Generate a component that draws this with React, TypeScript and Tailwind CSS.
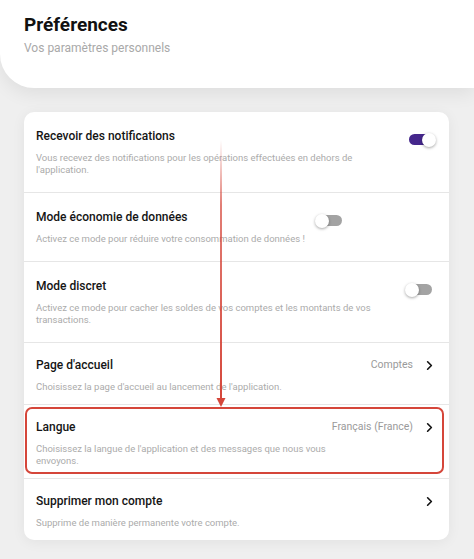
import { ChevronRight } from "lucide-react";

type Row = {
  title: string;
  desc: string;
  kind: "toggle" | "link";
  on?: boolean;
  value?: string;
  toggleRight?: string;
  descWidth?: string;
  highlight?: boolean;
};

const rows: Row[] = [
  {
    title: "Recevoir des notifications",
    desc: "Vous recevez des notifications pour les opérations effectuées en dehors de l'application.",
    kind: "toggle",
    on: true,
    toggleRight: "mr-[1px]",
  },
  {
    title: "Mode économie de données",
    desc: "Activez ce mode pour réduire votre consommation de données !",
    kind: "toggle",
    toggleRight: "mr-[95px]",
  },
  {
    title: "Mode discret",
    desc: "Activez ce mode pour cacher les soldes de vos comptes et les montants de vos transactions.",
    kind: "toggle",
    toggleRight: "mr-[5px]",
  },
  {
    title: "Page d'accueil",
    desc: "Choisissez la page d'accueil au lancement de l'application.",
    kind: "link",
    value: "Comptes",
  },
  {
    title: "Langue",
    desc: "Choisissez la langue de l'application et des messages que nous vous envoyons.",
    kind: "link",
    value: "Français (France)",
    descWidth: "max-w-[300px]",
    highlight: true,
  },
  {
    title: "Supprimer mon compte",
    desc: "Supprime de manière permanente votre compte.",
    kind: "link",
  },
];

function Toggle({ on }: { on?: boolean }) {
  return (
    <div className="relative w-[27px] h-[14px] flex items-center">
      <div
        className={
          on
            ? "w-[22px] h-[11px] rounded-full bg-[#45278c]"
            : "ml-[6px] w-[21px] h-[11px] rounded-full bg-[#a3a3a3]"
        }
      />
      <div
        className={
          "absolute top-0 w-[14px] h-[14px] rounded-full bg-white shadow-[0_1px_3px_rgba(0,0,0,0.35)] " +
          (on ? "right-0" : "left-0")
        }
      />
    </div>
  );
}

export default function App() {
  return (
    <div className="relative w-[474px] h-[559px] overflow-hidden bg-[#efefef] font-['Roboto',sans-serif]">
      {/* En-tête */}
      <div className="relative z-10 h-[88px] bg-white rounded-bl-[34px] px-6 pt-[13px] shadow-[0_6px_18px_rgba(0,0,0,0.07)]">
        <h1 className="text-[19px] leading-[24px] font-bold text-[#111]">Préférences</h1>
        <p className="mt-[3px] text-[12px] leading-[16px] text-[#a9a9a9]">Vos paramètres personnels</p>
      </div>

      {/* Liste des préférences */}
      <div className="px-6 pt-6">
        <div className="w-[425px] bg-white rounded-[10px] shadow-[0_2px_14px_rgba(0,0,0,0.06)]">
          {rows.map((row, i) => (
            <div
              key={row.title}
              className={
                "relative px-3 " +
                (i > 0 ? "border-t border-[#e6e6e6] " : "") +
                (row.kind === "toggle" ? "pt-4 pb-4" : "pt-[14px] pb-[11px]")
              }
            >
              {row.highlight && (
                <div className="absolute top-[2px] bottom-[4px] left-[1px] right-[5px] rounded-[7px] border-2 border-[#d5463a]" />
              )}
              <div className="flex items-center justify-between h-4">
                <span className="text-[12px] leading-4 font-medium text-[#151515]">{row.title}</span>
                {row.kind === "toggle" ? (
                  <div className={"mt-[7px] " + row.toggleRight}>
                    <Toggle on={row.on} />
                  </div>
                ) : (
                  <div className="flex items-center gap-[9px]">
                    {row.value && (
                      <span className="text-[10.5px] text-[#9a9a9a]">{row.value}</span>
                    )}
                    <ChevronRight className="w-[15px] h-[15px] text-[#111]" strokeWidth={2.6} />
                  </div>
                )}
              </div>
              <p className={"mt-2 text-[9.5px] leading-3 text-[#ababab] " + (row.descWidth ?? "max-w-[335px]")}>
                {row.desc}
              </p>
            </div>
          ))}
        </div>
      </div>

      {/* Flèche d'annotation */}
      <svg className="absolute inset-0 z-20 pointer-events-none" width="474" height="559">
        <defs>
          <linearGradient id="fade" x1="0" y1="140" x2="0" y2="400" gradientUnits="userSpaceOnUse">
            <stop offset="0" stopColor="#d5463a" stopOpacity="0" />
            <stop offset="0.25" stopColor="#d5463a" stopOpacity="0.7" />
            <stop offset="1" stopColor="#d5463a" stopOpacity="1" />
          </linearGradient>
        </defs>
        <line x1="221" y1="138" x2="221" y2="400" stroke="url(#fade)" strokeWidth="2" />
        <path d="M216.5 398 L225.5 398 L221 407 Z" fill="#d5463a" />
      </svg>
    </div>
  );
}
